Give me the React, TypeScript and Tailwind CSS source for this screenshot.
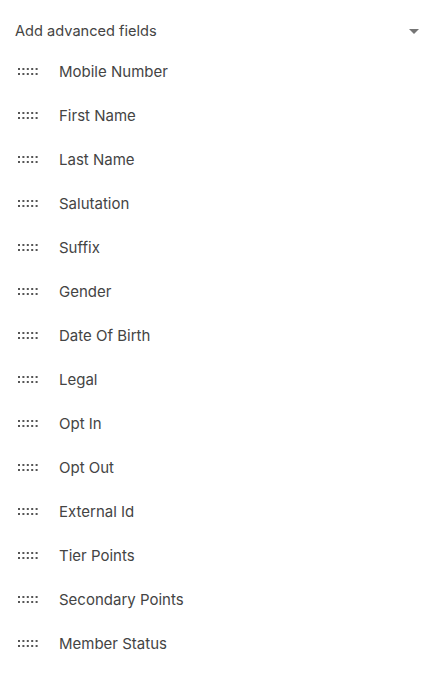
const FIELDS = [
  'Mobile Number',
  'First Name',
  'Last Name',
  'Salutation',
  'Suffix',
  'Gender',
  'Date Of Birth',
  'Legal',
  'Opt In',
  'Opt Out',
  'External Id',
  'Tier Points',
  'Secondary Points',
  'Member Status',
];

function DragHandle() {
  return (
    <svg width="22" height="8" viewBox="0 0 22 8" className="shrink-0">
      {[0, 1, 2, 3, 4].map((c) =>
        [0, 1].map((r) => (
          <rect key={`${c}-${r}`} x={c * 4.4} y={r * 5} width="2" height="2" fill="#555" />
        ))
      )}
    </svg>
  );
}

export default function App() {
  return (
    <div className="w-[445px] h-[674px] bg-white text-[#444] font-['Inter',sans-serif]">
      {/* Header */}
      <div className="flex items-center justify-between pl-[15px] pr-[26px] pt-[21px] h-[42px]">
        <span className="text-[14.6px]">Add advanced fields</span>
        <svg width="10" height="5" viewBox="0 0 10 5">
          <path d="M0 0h10L5 5z" fill="#757575" />
        </svg>
      </div>

      {/* Fields */}
      <ul className="flex flex-col mt-[8px]">
        {FIELDS.map((f) => (
          <li key={f} className="flex items-center h-[44px] pl-[18px]">
            <DragHandle />
            <span className="ml-[19px] text-[15px]">{f}</span>
          </li>
        ))}
      </ul>
    </div>
  );
}
